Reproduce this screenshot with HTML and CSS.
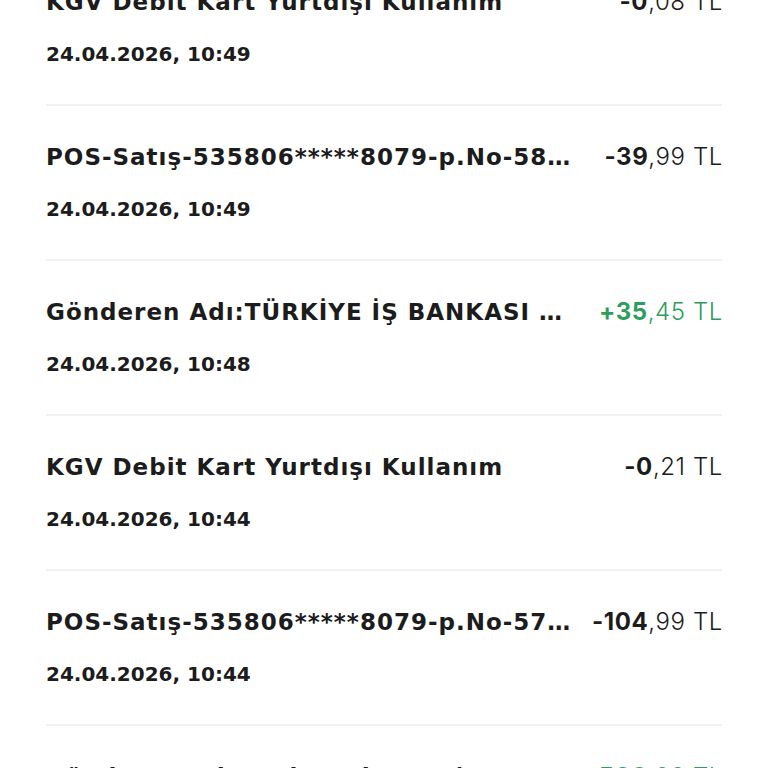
FILE: index.html
```html
<!DOCTYPE html>
<html lang="tr">
<head>
<meta charset="utf-8">
<link rel="stylesheet" href="styles.css">
</head>
<body>
<ul class="list">
  <li class="item">
    <div class="top">
      <span class="title">KGV Debit Kart Yurtdışı Kullanım</span>
      <span class="amount"><b>-0</b>,08 TL</span>
    </div>
    <div class="date">24.04.2026, 10:49</div>
  </li>
  <li class="item">
    <div class="top">
      <span class="title">POS-Satış-535806*****8079-p.No-5857421903</span>
      <span class="amount"><b>-39</b>,99 TL</span>
    </div>
    <div class="date">24.04.2026, 10:49</div>
  </li>
  <li class="item">
    <div class="top">
      <span class="title">Gönderen Adı:TÜRKİYE İŞ BANKASI A.Ş.</span>
      <span class="amount plus"><b>+35</b>,45 TL</span>
    </div>
    <div class="date">24.04.2026, 10:48</div>
  </li>
  <li class="item">
    <div class="top">
      <span class="title">KGV Debit Kart Yurtdışı Kullanım</span>
      <span class="amount"><b>-0</b>,21 TL</span>
    </div>
    <div class="date">24.04.2026, 10:44</div>
  </li>
  <li class="item">
    <div class="top">
      <span class="title">POS-Satış-535806*****8079-p.No-5712093845</span>
      <span class="amount"><b>-104</b>,99 TL</span>
    </div>
    <div class="date">24.04.2026, 10:44</div>
  </li>
  <li class="item">
    <div class="top">
      <span class="title">Gönderen Adı:Umit Aydın SN (67 Fatura)</span>
      <span class="amount plus"><b>+500</b>,00 TL</span>
    </div>
    <div class="date">24.04.2026, 10:41</div>
  </li>
</ul>
</body>
</html>
```
FILE: styles.css
```css
html, body {
  margin: 0;
  padding: 0;
  background: #ffffff;
}
body {
  font-family: "DejaVu Sans", Inter, sans-serif;
  color: #1c1c1c;
  overflow: hidden;
  height: 768px;
}
.list {
  list-style: none;
  margin: -49px 46px 0 46px;
  padding: 0;
}
.item {
  padding: 36px 0 35px 0;
  border-bottom: 2px solid #f1f1f1;
  display: flex;
  flex-direction: column;
  gap: 22px;
}
.top {
  display: flex;
  align-items: center;
  gap: 18px;
  height: 30px;
}
.title {
  flex: 1;
  min-width: 0;
  font-size: 23px;
  font-weight: 700;
  letter-spacing: 1px;
  line-height: 30px;
  white-space: nowrap;
  overflow: hidden;
  text-overflow: ellipsis;
}
.amount {
  flex: none;
  margin-right: -1px;
  font-family: Inter, sans-serif;
  font-size: 24px;
  font-weight: 300;
  line-height: 30px;
  letter-spacing: 0.6px;
  white-space: nowrap;
}
.amount b {
  font-weight: 700;
}
.amount.plus {
  color: #2e9d5c;
}
.date {
  font-size: 20px;
  font-weight: 700;
  line-height: 30px;
}
```
